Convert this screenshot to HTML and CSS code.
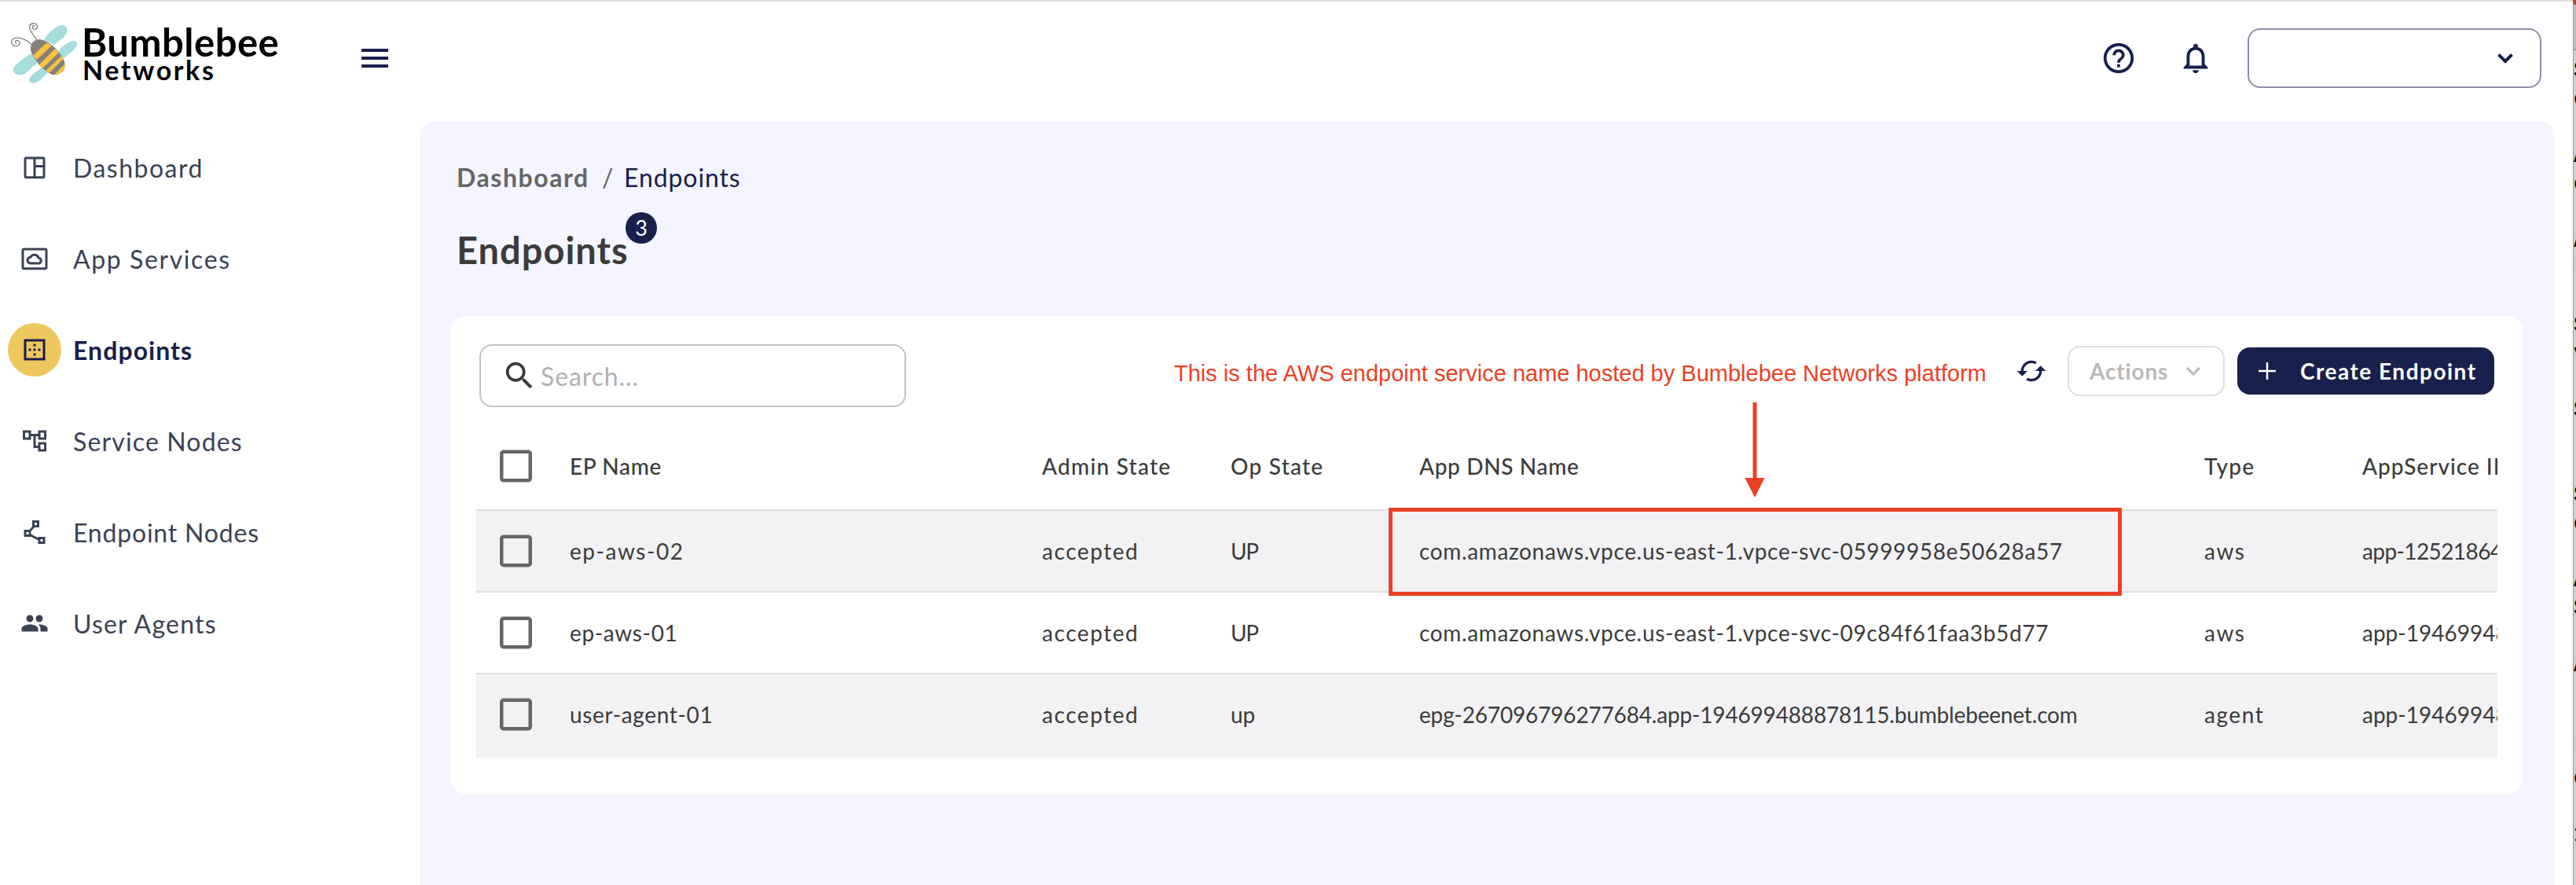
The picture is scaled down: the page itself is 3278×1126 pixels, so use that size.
FILE: index.html
```html
<!DOCTYPE html>
<html lang="en">
<head>
<meta charset="utf-8">
<title>Bumblebee Networks - Endpoints</title>
<link rel="stylesheet" href="styles.css">
</head>
<body>
<svg class="defs" width="0" height="0">
  <symbol id="checkbox" viewBox="0 0 42 42"><rect x="2.25" y="2.75" width="36.5" height="36.5" rx="2.5" fill="none" stroke="#666" stroke-width="4.5"/></symbol>
</svg>
<div class="app">
  <header class="header">
    <div class="logo">
      <svg class="bee" viewBox="0 0 360 300">
        <defs><clipPath id="body"><path d="M150 90C125 92 115 112 117 130C125 165 172 220 205 226C235 228 252 205 247 180C240 150 195 95 150 90Z"/></clipPath></defs>
        <g fill="#a7dcdd">
          <path d="M168 92C185 60 225 32 243 36C262 42 258 68 245 80C228 95 215 102 207 112Z"/>
          <path d="M222 137C240 112 272 92 288 97C302 105 292 125 270 140C255 152 248 158 238 164Z"/>
          <path d="M122 143C90 160 50 190 50 208C55 230 80 230 95 221C115 205 130 190 145 178Z"/>
          <path d="M162 196C135 215 110 235 111 248C118 264 145 256 160 240C175 225 178 222 185 214Z"/>
        </g>
        <g clip-path="url(#body)">
          <path fill="#87807a" d="M100 80H260V240H100Z"/>
          <path fill="#f7c33f" d="M126 152L178 103L197 115L140 168ZM150 187L210 127L225 140L163 200ZM172 212L238 150L244 162L184 222ZM204 230L252 178L260 235Z"/>
        </g>
        <g fill="none" stroke="#87807a" stroke-width="4">
          <path d="M140 92C130 75 108 55 113 38C120 24 142 28 143 42C142 54 123 54 124 43C125 36 133 37 131 43"/>
          <path d="M120 110C105 92 75 80 55 86C38 92 42 114 60 116C78 116 80 95 66 94C56 94 56 107 65 105"/>
        </g>
      </svg>
      <div class="brand"><span class="brand-top">Bumblebee</span><span class="brand-sub">Networks</span></div>
    </div>
    <div class="burger"><i></i><i></i><i></i></div>
    <svg class="help" viewBox="0 0 24 24" fill="#18204c"><path d="M11 18h2v-2h-2v2zm1-16C6.48 2 2 6.48 2 12s4.480 10 10 10 10-4.480 10-10S17.520 2 12 2zm0 18c-4.410 0-8-3.590-8-8s3.590-8 8-8 8 3.590 8 8-3.590 8-8 8zm0-14c-2.210 0-4 1.790-4 4h2c0-1.100.9-2 2-2s2 .9 2 2c0 2-3 1.750-3 5h2c0-2.250 3-2.500 3-5 0-2.210-1.790-4-4-4z"/></svg>
    <svg class="bell" viewBox="0 0 24 24" fill="#18204c"><path d="M12 22c1.100 0 2-.9 2-2h-4c0 1.100.9 2 2 2zm6-6v-5c0-3.070-1.630-5.640-4.500-6.320V4c0-.83-.67-1.500-1.500-1.500s-1.500.67-1.500 1.500v.68C7.640 5.360 6 7.920 6 11v5l-2 2v1h16v-1l-2-2zm-2 1H8v-6c0-2.480 1.510-4.500 4-4.500s4 2.020 4 4.500v6z"/></svg>
    <div class="select"><svg viewBox="0 0 24 16" fill="none" stroke="#18204c" stroke-width="4"><path d="M3.500 3.500L12 12L20.500 3.500"/></svg></div>
  </header>
  <div class="content">
    <nav class="sidebar">
      <a class="item"><span class="ico"><svg viewBox="0 0 24 24" fill="none" stroke="#3a4254" stroke-width="2"><rect x="4" y="4" width="16" height="16.500" rx="1"/><path d="M12 4v16.500M12 11h8"/></svg></span><span class="n1">Dashboard</span></a>
      <a class="item"><span class="ico"><svg viewBox="0 0 24 24" fill="none" stroke="#3a4254" stroke-width="2"><rect x="2" y="4" width="20" height="16.500" rx="1"/><path d="M8.800 16a2.600 2.600 0 0 1-.3-5.200a3.800 3.800 0 0 1 7 .7a2.300 2.300 0 0 1 .3 4.500z"/></svg></span><span class="n2">App Services</span></a>
      <a class="item active"><span class="ico"><svg viewBox="0 0 24 24" fill="#18204c"><path d="M13 7h-2v2h2V7zm0 4h-2v2h2v-2zm4 0h-2v2h2v-2zM3 3v18h18V3H3zm16 16H5V5h14v14zm-6-4h-2v2h2v-2zm-4-4H7v2h2v-2z"/></svg></span><span class="n3">Endpoints</span></a>
      <a class="item"><span class="ico"><svg viewBox="0 0 24 24" fill="#3a4254"><path d="M22 11V3h-7v3H9V3H2v8h7V8h2v10h4v3h7v-8h-7v3h-2V8h2v3h7zM7 9H4V5h3v4zm10 6h3v4h-3v-4zm0-10h3v4h-3V5z"/></svg></span><span class="n4">Service Nodes</span></a>
      <a class="item"><span class="ico"><svg viewBox="0 0 24 24" fill="none" stroke="#3a4254" stroke-width="2"><path d="M11 3h4v4h-4zM4 11h4v4H4zM16 17h4v4h-4zM8 11l4-4.500M8.500 14.500L16 18.500"/></svg></span><span class="n5">Endpoint Nodes</span></a>
      <a class="item"><span class="ico"><svg viewBox="0 0 24 24" fill="#3a4254"><path d="M16 11c1.660 0 2.990-1.340 2.990-3S17.660 5 16 5c-1.660 0-3 1.340-3 3s1.340 3 3 3zm-8 0c1.660 0 2.990-1.340 2.990-3S9.660 5 8 5C6.340 5 5 6.340 5 8s1.340 3 3 3zm0 2c-2.330 0-7 1.170-7 3.500V19h14v-2.500c0-2.330-4.670-3.500-7-3.500zm8 0c-.29 0-.62.020-.97.050 1.160.840 1.970 1.970 1.970 3.450V19h6v-2.500c0-2.330-4.670-3.500-7-3.500z"/></svg></span><span class="n6">User Agents</span></a>
    </nav>
    <main class="main">
      <div class="crumbs"><b>Dashboard</b><span class="slash">/</span><span class="here">Endpoints</span></div>
      <h1>Endpoints<span class="badge">3</span></h1>
      <section class="card">
        <div class="toolbar">
          <div class="search"><svg viewBox="0 0 24 24" fill="#3b3b3b"><path d="M15.500 14h-.79l-.28-.27C15.410 12.590 16 11.110 16 9.500 16 5.910 13.090 3 9.500 3S3 5.910 3 9.500 5.910 16 9.500 16c1.610 0 3.090-.59 4.230-1.570l.27.28v.79l5 4.990L20.490 19l-4.990-5zm-6 0C7.010 14 5 11.990 5 9.500S7.010 5 9.500 5 14 7.010 14 9.500 11.990 14 9.500 14z"/></svg><span>Search...</span></div>
          <div class="buttons">
            <svg class="refresh" viewBox="0 0 24 24" fill="#18204c"><path d="M19 8l-4 4h3c0 3.310-2.690 6-6 6-1.010 0-1.970-.25-2.800-.7l-1.460 1.460C8.970 19.540 10.430 20 12 20c4.420 0 8-3.580 8-8h3l-4-4zM6 12c0-3.310 2.690-6 6-6 1.010 0 1.970.25 2.800.7l1.460-1.460C15.030 4.460 13.570 4 12 4c-4.420 0-8 3.580-8 8H1l4 4 4-4H6z"/></svg>
            <div class="actions"><span>Actions</span><svg viewBox="0 0 20 12" fill="none" stroke="#b9b9b9" stroke-width="3"><path d="M2 2L10 10L18 2"/></svg></div>
            <div class="create"><svg viewBox="0 0 22 22" stroke="#fff" stroke-width="2.500"><path d="M11 0V22M0 11H22"/></svg><span>Create Endpoint</span></div>
          </div>
        </div>
        <div class="table">
          <div class="row head"><svg class="box"><use href="#checkbox"/></svg><span class="l7">EP Name</span><span class="l12">Admin State</span><span class="l12">Op State</span><span class="l7">App DNS Name</span><span class="l12">Type</span><span class="l10">AppService ID</span></div>
          <div class="row odd"><svg class="box"><use href="#checkbox"/></svg><span class="l15">ep-aws-02</span><span class="l15">accepted</span><span class="up">UP</span><span class="l7">com.amazonaws.vpce.us-east-1.vpce-svc-05999958e50628a57</span><span class="l15">aws</span><span class="tight">app-12521864</span></div>
          <div class="row"><svg class="box"><use href="#checkbox"/></svg><span class="l7">ep-aws-01</span><span class="l15">accepted</span><span class="up">UP</span><span class="l7">com.amazonaws.vpce.us-east-1.vpce-svc-09c84f61faa3b5d77</span><span class="l15">aws</span><span>app-194699488878115</span></div>
          <div class="row odd"><svg class="box"><use href="#checkbox"/></svg><span class="l7">user-agent-01</span><span class="l15">accepted</span><span>up</span><span class="epg">epg-267096796277684.app-194699488878115.bumblebeenet.com</span><span class="l15">agent</span><span>app-194699488878115</span></div>
        </div>
      </section>
    </main>
  </div>
</div>
<aside class="behind"><pre>S
e

A
e

A
r

S
v

S


S
o

A
S

A


r
o

1</pre></aside>
<div class="note">This is the AWS endpoint service name hosted by Bumblebee Networks platform</div>
<svg class="arrow" viewBox="0 0 26 122"><path d="M13 0V98" stroke="#ec3f25" stroke-width="5"/><path d="M.5 96H25.500L13 121Z" fill="#ec3f25"/></svg>
<div class="highlight"></div>
</body>
</html>
```
FILE: styles.css
```css
* { box-sizing: border-box; }
body { margin: 0; width: 3278px; height: 1126px; display: flex; position: relative; overflow: hidden; background: #fff; color: #3b3b3b; font-family: Lato, sans-serif; }
svg { display: block; flex: none; }
.defs { position: absolute; }
.app { width: 3274px; height: 1126px; border-top: 2px solid #dcdcdc; display: flex; flex-direction: column; }

.header { height: 144px; margin-bottom: 8px; padding-right: 40px; display: flex; align-items: center; flex: none; }
.logo { width: 460px; height: 144px; padding-top: 18px; display: flex; align-items: flex-start; }
.bee { width: 120px; height: 100px; }
.brand { margin: 15px 0 0 -16px; display: flex; flex-direction: column; color: #000; font-weight: 700; }
.brand-top { font-size: 49px; line-height: 36px; letter-spacing: .5px; }
.brand-sub { font-size: 34px; line-height: 35px; letter-spacing: 2.600px; padding-left: 1px; }
.burger { width: 34px; display: flex; flex-direction: column; gap: 6px; margin-right: auto; }
.burger i { height: 4px; background: #18204c; }
.help, .bell { width: 46px; height: 46px; }
.help { margin-right: 52px; }
.bell { margin-right: 43px; }
.select { width: 374px; height: 76px; border: 2px solid #8b8fa6; border-radius: 16px; display: flex; align-items: center; justify-content: flex-end; padding-right: 32px; }
.select svg { width: 24px; height: 16px; }

.content { display: flex; flex: 1; }
.sidebar { width: 534px; padding-top: 1px; font-size: 32px; color: #3a4254; }
.item { height: 116px; padding-left: 10px; display: flex; align-items: center; gap: 15px; }
.ico { width: 68px; height: 68px; border-radius: 50%; display: flex; align-items: center; justify-content: center; }
.ico svg { width: 36px; height: 36px; }
.active { color: #18204c; font-weight: 700; }
.active .ico { background: #eec75f; }
.n1 { letter-spacing: 1.500px; }
.n2 { letter-spacing: 1.600px; }
.n3 { letter-spacing: 1.050px; }
.n4 { letter-spacing: 1.150px; }
.n5 { letter-spacing: .8px; }
.n6 { letter-spacing: 1.200px; }

.main { width: 2716px; padding: 52px 40px 0; border-radius: 20px 20px 0 0; background: #f4f5ff; }
.crumbs { padding-left: 7px; display: flex; font-size: 32px; line-height: 40px; color: #666; }
.crumbs b { width: 185px; letter-spacing: 1.550px; }
.slash { width: 28px; }
.here { color: #18204c; letter-spacing: .9px; }
h1 { margin: 44px 0 56px 7px; position: relative; font-size: 47px; line-height: 56px; letter-spacing: 1px; font-weight: 700; }
.badge { position: absolute; left: 215px; top: -20px; width: 40px; height: 40px; border-radius: 50%; background: #18204c; color: #fff; font-size: 27px; line-height: 40px; font-weight: 400; letter-spacing: 0; text-align: center; }

.card { height: 608px; padding-top: 36px; background: #fff; border-radius: 18px; }
.toolbar { height: 102px; padding: 0 36px; display: flex; justify-content: space-between; align-items: flex-start; }
.search { width: 543px; height: 80px; border: 2px solid #c2c2c2; border-radius: 16px; padding-left: 26px; display: flex; align-items: center; gap: 4px; font-size: 32px; letter-spacing: .9px; color: #b0b0b0; }
.search svg { width: 46px; height: 46px; }
.buttons { height: 64px; margin-top: 2px; display: flex; align-items: center; font-size: 28px; font-weight: 700; }
.refresh { width: 40px; height: 40px; margin-right: 26px; }
.actions { width: 200px; height: 64px; margin-right: 16px; padding: 0 28px 0 26px; border: 2px solid #dedede; border-radius: 16px; display: flex; align-items: center; justify-content: space-between; color: #b9b9b9; letter-spacing: .85px; }
.actions svg { width: 20px; height: 12px; }
.create { width: 327px; height: 60px; padding-left: 27px; border-radius: 16px; background: #18204c; color: #fff; display: flex; align-items: center; gap: 31px; letter-spacing: 1.500px; white-space: nowrap; }
.create svg { width: 22px; height: 22px; }

.table { margin: 0 32px; overflow: hidden; font-size: 28px; }
.row { height: 104px; padding-left: 30px; display: grid; grid-template-columns: 89px 601px 240px 240px 999px 201px 172px; align-items: center; border-bottom: 2px solid #dfdfe0; white-space: nowrap; }
.row:last-child { border-bottom-color: #f2f2f4; height: 106px; padding-bottom: 3px; }
.head { height: 110px; padding-bottom: 2px; font-weight: 500; }
.odd { background: #f2f2f4; }
.box { width: 42px; height: 42px; }
.l7 { letter-spacing: .65px; }
.l10 { letter-spacing: 1px; }
.l12 { letter-spacing: 1.250px; }
.l15 { letter-spacing: 1.550px; }
.up { letter-spacing: -1.300px; }
.epg { letter-spacing: -.17px; }
.tight { letter-spacing: -.6px; }

.behind { width: 4px; height: 1126px; overflow: hidden; padding-top: 66px; border-top: 6px solid #b04a35; border-left: 1px solid #999; background: linear-gradient(#c5bfbb 56px, #999 56px, #999 58px, #d0d0d0 58px); }
.behind pre { margin: 0; font: 700 30px/36px "Liberation Mono", monospace; color: #000; }

/* Callout drawn over the page */
.note { position: absolute; left: 1494px; top: 458px; font: 29px/34px "Liberation Sans", sans-serif; color: #ec3f25; white-space: nowrap; }
.arrow { position: absolute; left: 2220px; top: 512px; width: 26px; height: 122px; }
.highlight { position: absolute; left: 1767px; top: 646px; width: 933px; height: 112px; border: 5px solid #ec3f25; }
```
